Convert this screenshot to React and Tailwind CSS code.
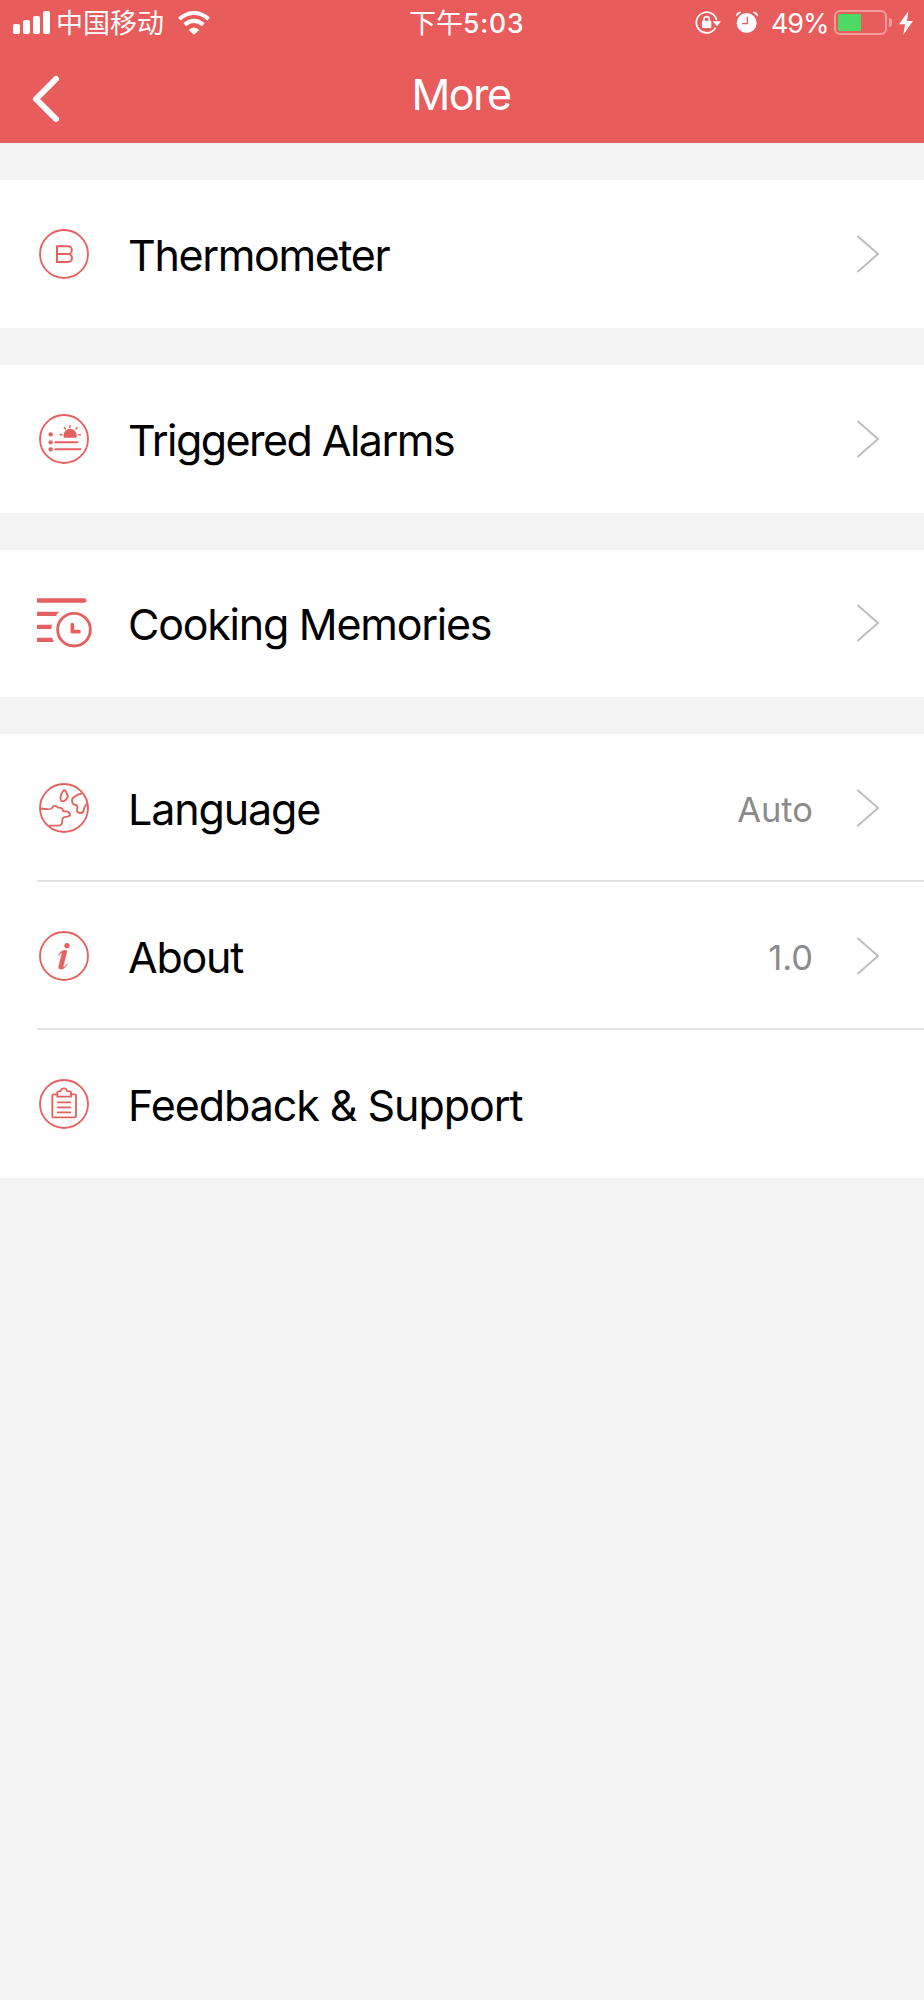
import React from 'react';

const Icon = ({ box, children }) => (
    <svg
        viewBox={box}
        className="w-[60px] h-[60px] shrink-0"
        fill="none"
        stroke="#e5605f"
        strokeWidth="5.5"
        strokeLinecap="round"
        strokeLinejoin="round"
    >
        {children}
    </svg>
);

const ThermometerIcon = () => (
    <Icon box="31 31 180 180">
        <circle cx="121" cy="121" r="72" />
        <path d="M100 98h33a11 11 0 0 1 0 23h-33zM100 121h33a12 12 0 0 1 0 24h-33z" strokeLinejoin="miter" strokeWidth="6" />
    </Icon>
);

const AlarmsIcon = () => (
    <Icon box="31 26 180 180">
        <circle cx="121" cy="116" r="72" />
        <g fill="#e5605f" stroke="none">
            <circle cx="81" cy="102" r="6.5" />
            <circle cx="81" cy="126" r="6.5" />
            <circle cx="81" cy="147" r="6.5" />
            <path d="M120 112v-7a19 19 0 0 1 39 0v7z" />
        </g>
        <path d="M95 126h66M95 147h75" strokeWidth="6" />
        <path d="M109 103h6M165 103h5M122 82l3 4M139 76v5M160 82l-3 4" strokeWidth="4.5" />
    </Icon>
);

const MemoriesIcon = () => (
    <Icon box="30 28 180 180">
        <g fill="#e5605f" stroke="none">
            <path d="M39 44h142a6.500 6.500 0 0 1 0 13H39z" />
            <path d="M39 84h67q-7 5-10 13H39z" />
            <path d="M39 123h45q-2 6-2 13H39z" />
            <path d="M39 162h46q1 7 5 13H39z" />
        </g>
        <circle cx="150" cy="138" r="49" strokeWidth="8.5" />
        <path d="M145 123v21h20" strokeWidth="11" />
    </Icon>
);

const LanguageIcon = () => (
    <Icon box="31 30 180 180">
        <circle cx="121" cy="120" r="72" />
        <path d="M121 67c-7 4-12 19-10 28 2 7 10 6 16 0 6-6 7-12 3-17-4-4-2-13-9-11z" />
        <path d="M174 77c-10 0-18 7-24 11-8 6-6 23 6 23 7 0 5 9 4 15-1 12 20 12 20 0 0-9 6-13 10-19" />
        <path d="M50 121c12 2 32 6 35-1 3-7 12-10 17-1 6 0 14-1 15 6 0 8 9 3 15 6 7 4 11 10 2 14-9 3-17 0-18 9 0 11 0 19-12 19H76" />
    </Icon>
);

const AboutIcon = () => (
    <Icon box="31 30 180 180">
        <circle cx="121" cy="120" r="72" />
        <circle cx="130" cy="89" r="8" fill="#e5605f" stroke="none" />
        <path d="M104 117c5-9 12-14 20-15q8-1 5 9l-9 35c-2 7 0 9 4 5l6-8 1 2c-5 9-12 15-20 15q-8 0-6-9l9-36c1-7-3-4-8 3z" fill="#e5605f" strokeWidth="1" />
    </Icon>
);

const FeedbackIcon = () => (
    <Icon box="31 30 180 180">
        <circle cx="121" cy="120" r="72" />
        <path d="M101 91H89q-3 0-3 3v63q0 3 3 3h65q3 0 3-3V94q0-3-3-3h-12" />
        <path d="M101 98V85q0-3 4-3h4c2 0 3-1 3-3 1-8 16-8 17 0 0 2 1 3 3 3h6q4 0 4 3v13zM102 115h38M102 130h38M102 145h38" />
    </Icon>
);

const sections = [
    [{ icon: ThermometerIcon, label: 'Thermometer', arrow: true, tracking: 'tracking-[-1.35px]' }],
    [{ icon: AlarmsIcon, label: 'Triggered Alarms', arrow: true, tracking: 'tracking-[-1.55px]' }],
    [{ icon: MemoriesIcon, label: 'Cooking Memories', arrow: true, tracking: 'tracking-[-1.25px]' }],
    [
        { icon: LanguageIcon, label: 'Language', value: 'Auto', arrow: true, tracking: 'tracking-[-1.15px]' },
        { icon: AboutIcon, label: 'About', value: '1.0', arrow: true, tracking: 'tracking-[-1.25px]' },
        { icon: FeedbackIcon, label: 'Feedback & Support', tracking: 'tracking-[-1.05px]' },
    ],
];

const Row = ({ item, divider }) => {
    const RowIcon = item.icon;
    return (
        <div className="h-[147.75px]">
            <div className="h-full flex items-center pl-[34px] pr-[44px]">
                <RowIcon />
                <span className={`ml-[34px] text-[43px] leading-none mt-[3px] ${item.tracking}`}>{item.label}</span>
                {item.value && (
                    <span className="ml-auto text-[34.500px] leading-none mt-[4px] text-[#8b8b8b]">{item.value}</span>
                )}
                {item.arrow && (
                    <svg viewBox="0 0 24 40" className={`w-6 h-10 ${item.value ? 'ml-[43px]' : 'ml-auto'}`} fill="none" stroke="#bdbdbd" strokeWidth="2" strokeLinecap="round">
                        <path d="M2 2.500L22 20 2 37.500" />
                    </svg>
                )}
            </div>
            {divider && <div className="h-[2px] -mt-[2px] ml-[37px] bg-[#e2e2e2]" />}
        </div>
    );
};

const StatusBar = () => (
    <div className="h-[45px] flex items-center">
        <div className="flex items-end gap-[3px] ml-[13px] h-[23px]">
            <div className="w-[7px] h-[10px] rounded-[2px] bg-white" />
            <div className="w-[7px] h-[14px] rounded-[2px] bg-white" />
            <div className="w-[7px] h-[18px] rounded-[2px] bg-white" />
            <div className="w-[7px] h-[23px] rounded-[2px] bg-white" />
        </div>
        <span className="ml-[6px] -mt-[2px] w-[110px] whitespace-nowrap text-[27px] leading-none font-['Noto_Sans_CJK_SC',sans-serif]">中国移动</span>
        <svg viewBox="0 0 96 72" className="ml-[12px] w-8 h-6" fill="none" stroke="white" strokeWidth="12">
            <path d="M4 24Q48-12 92 24M20 41Q48 18 76 41" />
            <path d="M32 57q16-15 32 0L48 71z" fill="white" stroke="none" />
        </svg>
        <div className="ml-[199px] flex items-center w-[118px] whitespace-nowrap leading-none">
            <span className="-mt-[2px] text-[27px] font-['Noto_Sans_CJK_SC',sans-serif]">下午</span>
            <span className="mt-[2px] text-[26.500px] font-medium tracking-[0.8px]">5:03</span>
        </div>
        <svg viewBox="45 30 81 75" className="ml-[168px] w-[27px] h-[25px]" fill="none" stroke="white" strokeWidth="5">
            <path d="M107 83A31 31 0 1 1 110 60" />
            <path d="M98 64h25l-12 15z" fill="white" stroke="none" />
            <rect x="66" y="62" width="28" height="22" rx="3" fill="white" stroke="none" />
            <path d="M72 64v-6a8 8 0 0 1 16 0v6" />
        </svg>
        <svg viewBox="163 30 72 75" className="ml-[13px] w-6 h-[25px]" fill="none">
            <circle cx="198" cy="69" r="30" fill="white" />
            <path d="M167 48q0-12 14-12zM231 48q0-12-14-12z" fill="white" stroke="white" strokeWidth="2" />
            <path d="M200 50v21h-16" stroke="#e85c5c" strokeWidth="4" />
        </svg>
        <span className="ml-[12px] mt-[2px] w-[58px] whitespace-nowrap text-[27px] leading-none tracking-[-1.1px]">49%</span>
        <div className="ml-[5px] w-[53px] h-[25px] border-2 border-white/40 rounded-[6px] p-[2px]">
            <div className="w-[23px] h-full rounded-l-[2px] bg-[#4cd964]" />
        </div>
        <div className="ml-[2px] w-[3px] h-[9px] rounded-r-full bg-white/40" />
        <svg viewBox="0 0 42 72" className="ml-[7px] w-[14px] h-6" fill="white">
            <path d="M28 1L0 40h18l-5 31 29-41H24z" />
        </svg>
    </div>
);

const App = () => {
    return (
        <div className="min-h-[2000px] bg-[#f3f3f3] text-black font-['Inter',sans-serif]">
            <header className="h-[143px] bg-[#e85c5c] text-white">
                <StatusBar />
                <div className="h-[98px] grid grid-cols-3 items-center">
                    <svg viewBox="0 0 30 50" className="ml-[31px] mt-[10px] w-[30px] h-[50px]" fill="none" stroke="white" strokeWidth="6" strokeLinecap="round" strokeLinejoin="round">
                        <path d="M25 5L5 25l20 20" />
                    </svg>
                    <h1 className="pr-[2px] text-center text-[43px] leading-none tracking-[-1.5px]">More</h1>
                </div>
            </header>
            <main className="pt-[37px] flex flex-col gap-[37px]">
                {sections.map((items, i) => (
                    <section key={i} className="bg-white">
                        {items.map((item, j) => (
                            <Row key={item.label} item={item} divider={j < items.length - 1} />
                        ))}
                    </section>
                ))}
            </main>
        </div>
    );
};

export default App;
